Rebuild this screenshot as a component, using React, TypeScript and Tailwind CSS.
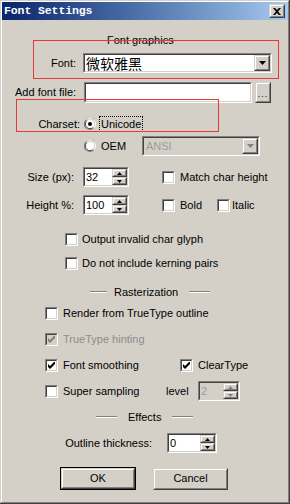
import type { ReactNode } from 'react';

const face = 'bg-[#d4d0c8]';

function Sunken({ className = '', bg = 'bg-white', children }: { className?: string; bg?: string; children?: ReactNode }) {
  return (
    <div className={`border border-t-[#808080] border-l-[#808080] border-b-white border-r-white ${className}`}>
      <div className={`h-full w-full border border-t-[#404040] border-l-[#404040] border-b-[#d4d0c8] border-r-[#d4d0c8] ${bg} flex items-center overflow-hidden`}>
        {children}
      </div>
    </div>
  );
}

function Raised({ className = '', children }: { className?: string; children?: ReactNode }) {
  return (
    <div className={`border border-t-[#d4d0c8] border-l-[#d4d0c8] border-b-[#404040] border-r-[#404040] ${face} ${className}`}>
      <div className="h-full w-full border border-t-white border-l-white border-b-[#808080] border-r-[#808080] flex items-center justify-center">
        {children}
      </div>
    </div>
  );
}

function Arrow({ up = false, gray = false, w = 7 }: { up?: boolean; gray?: boolean; w?: number }) {
  const h = Math.ceil(w / 2);
  return (
    <svg width={w} height={h} viewBox={`0 0 ${w} ${h}`} className="block">
      <path d={up ? `M0 ${h} L${w / 2} 0 L${w} ${h} Z` : `M0 0 L${w} 0 L${w / 2} ${h} Z`} fill={gray ? '#808080' : '#000'} />
    </svg>
  );
}

function Combo({ className = '', disabled = false, children }: { className?: string; disabled?: boolean; children?: ReactNode }) {
  return (
    <Sunken className={className} bg={disabled ? face : 'bg-white'}>
      <div className="flex-1 flex items-center pl-[1px] h-full">{children}</div>
      <Raised className="w-[16px] h-full">
        <Arrow gray={disabled} />
      </Raised>
    </Sunken>
  );
}

function Spinner({ value, className = '', disabled = false }: { value: string; className?: string; disabled?: boolean }) {
  return (
    <Sunken className={className} bg={disabled ? face : 'bg-white'}>
      <span className={`flex-1 pl-[1px] text-[11px] ${disabled ? 'text-[#9a9a9a]' : 'text-black'}`}>{value}</span>
      <div className="flex flex-col h-full w-[15px]">
        <Raised className="flex-1 w-full">
          <Arrow up w={5} gray={disabled} />
        </Raised>
        <Raised className="flex-1 w-full">
          <Arrow w={5} gray={disabled} />
        </Raised>
      </div>
    </Sunken>
  );
}

function Check({ checked = false, disabled = false, className = '' }: { checked?: boolean; disabled?: boolean; className?: string }) {
  return (
    <Sunken className={`w-[13px] h-[13px] shrink-0 ${className}`} bg={disabled ? face : 'bg-white'}>
      {checked && (
        <svg width="7" height="7" viewBox="0 0 7 7" className="ml-[1px]">
          <path d="M0 2 L2 4 L7 -1 V2 L2 7 L0 5 Z" fill={disabled ? '#808080' : '#000'} />
        </svg>
      )}
    </Sunken>
  );
}

function Radio({ checked = false }: { checked?: boolean }) {
  return (
    <svg width="12" height="12" viewBox="0 0 12 12" className="shrink-0">
      <path d="M10.24 1.76 A6 6 0 0 0 1.76 10.24" stroke="#808080" strokeWidth="1" fill="none" transform="translate(0 0)" />
      <circle cx="6" cy="6" r="5.5" fill="none" stroke="#808080" strokeDasharray="17.3 17.3" strokeDashoffset="-4.3" />
      <circle cx="6" cy="6" r="5.5" fill="none" stroke="#ffffff" strokeDasharray="17.3 17.3" strokeDashoffset="-21.6" />
      <circle cx="6" cy="6" r="4.5" fill="none" stroke="#404040" strokeDasharray="14.1 14.1" strokeDashoffset="-3.5" />
      <circle cx="6" cy="6" r="4.5" fill="none" stroke="#d4d0c8" strokeDasharray="14.1 14.1" strokeDashoffset="-17.6" />
      <circle cx="6" cy="6" r="4" fill="#fff" />
      {checked && <circle cx="6" cy="6" r="2" fill="#000" />}
    </svg>
  );
}

function Divider({ label, left, l1, gap1, gap2, l2 }: { label: string; left: number; l1: number; gap1: number; gap2: number; l2: number }) {
  return (
    <div className="flex items-center" style={{ paddingLeft: left }}>
      <div className="border-t border-t-[#808080] border-b border-b-white" style={{ width: l1 }} />
      <span style={{ marginLeft: gap1, marginRight: gap2 }}>{label}</span>
      <div className="border-t border-t-[#808080] border-b border-b-white" style={{ width: l2 }} />
    </div>
  );
}

export default function App() {
  return (
    <div className={`relative w-[290px] h-[504px] ${face} overflow-hidden font-['Liberation_Sans',Arial,sans-serif] text-[11px] text-black leading-none shadow-[inset_-1px_-1px_#404040,inset_1px_1px_#d4d0c8,inset_-2px_-2px_#808080,inset_2px_2px_#ffffff]`}>
      {/* title bar */}
      <div className="mx-[2px] mt-[2px] h-[18px] flex items-center bg-gradient-to-r from-[#0a246a] to-[#a6caf0]">
        <span className="ml-[2px] font-['Liberation_Mono',monospace] font-bold text-[11.5px] text-white tracking-[-0.1px]">Font Settings</span>
        <Raised className="ml-auto mr-[3px] w-[16px] h-[14px]">
          <svg width="8" height="7" viewBox="0 0 8 7">
            <path d="M0 0 H2 L4 2 L6 0 H8 L5 3.5 L8 7 H6 L4 5 L2 7 H0 L3 3.5 Z" fill="#000" />
          </svg>
        </Raised>
      </div>

      <div className="flex flex-col">
        <div className="mt-[13px] h-[14px] flex items-center pl-[107px]">Font graphics</div>

        <div className="mt-[6px] h-[20px] flex items-center">
          <span className="w-[76px] text-right">Font:</span>
          <Combo className="ml-[7px] w-[189px] h-[20px]">
            <span className="font-['Noto_Sans_CJK_SC',sans-serif] text-[14px] leading-none">微软雅黑</span>
          </Combo>
        </div>

        <div className="mt-[9px] h-[21px] flex items-center pl-[15px]">
          <span className="w-[69px]">Add font file:</span>
          <Sunken className="w-[168px] h-[21px]" />
          <Raised className="ml-[3px] w-[16px] h-[21px]">
            <span className="text-[9px] tracking-[1px] pt-[3px]">...</span>
          </Raised>
        </div>

        <div className="mt-[13px] h-[16px] flex items-center">
          <span className="w-[80px] text-right">Charset:</span>
          <span className="ml-[4px]"><Radio checked /></span>
          <span className="ml-[3px] h-[16px] px-[1px] flex items-center border border-dotted border-black">Unicode</span>
        </div>

        <div className="mt-[4px] h-[20px] flex items-center">
          <span className="ml-[84px]"><Radio /></span>
          <span className="ml-[5px] w-[41px]">OEM</span>
          <Combo disabled className="w-[118px] h-[20px]">
            <span className="text-[#9a9a9a] pl-[1px]">ANSI</span>
          </Combo>
        </div>

        <div className="mt-[11px] h-[20px] flex items-center">
          <span className="w-[74px] text-right">Size (px):</span>
          <Spinner value="32" className="ml-[9px] w-[46px] h-[20px]" />
          <Check className="ml-[33px]" />
          <span className="ml-[5px]">Match char height</span>
        </div>

        <div className="mt-[8px] h-[20px] flex items-center">
          <span className="w-[74px] text-right">Height %:</span>
          <Spinner value="100" className="ml-[9px] w-[46px] h-[20px]" />
          <Check className="ml-[33px]" />
          <span className="ml-[5px] w-[37px]">Bold</span>
          <Check />
          <span className="ml-[2px]">Italic</span>
        </div>

        <div className="mt-[16px] h-[16px] flex items-center pl-[65px]">
          <Check />
          <span className="ml-[4px]">Output invalid char glyph</span>
        </div>

        <div className="mt-[8px] h-[16px] flex items-center pl-[65px]">
          <Check />
          <span className="ml-[4px]">Do not include kerning pairs</span>
        </div>

        <div className="mt-[14px] h-[14px] flex items-center">
          <Divider label="Rasterization" left={90} l1={17} gap1={7} gap2={11} l2={21} />
        </div>

        <div className="mt-[6px] h-[16px] flex items-center pl-[45px]">
          <Check />
          <span className="ml-[5px]">Render from TrueType outline</span>
        </div>

        <div className="mt-[10px] h-[16px] flex items-center pl-[45px]">
          <Check checked disabled />
          <span className="ml-[5px] text-[#8c8c8c]">TrueType hinting</span>
        </div>

        <div className="mt-[10px] h-[16px] flex items-center pl-[45px]">
          <Check checked />
          <span className="ml-[5px] w-[117px]">Font smoothing</span>
          <Check checked />
          <span className="ml-[5px]">ClearType</span>
        </div>

        <div className="mt-[8px] h-[20px] flex items-center pl-[45px]">
          <Check />
          <span className="ml-[5px] w-[103px]">Super sampling</span>
          <span className="w-[32px]">level</span>
          <Spinner disabled value="2" className="w-[42px] h-[20px]" />
        </div>

        <div className="mt-[9px] h-[14px] flex items-center">
          <Divider label="Effects" left={96} l1={21} gap1={11} gap2={11} l2={21} />
        </div>

        <div className="mt-[9px] h-[20px] flex items-center">
          <span className="w-[152px] text-right">Outline thickness:</span>
          <Spinner value="0" className="ml-[15px] w-[50px] h-[20px]" />
        </div>

        <div className="mt-[14px] h-[23px] flex items-center pl-[60px]">
          <div className="w-[76px] h-[23px] border border-black">
            <Raised className="w-full h-full">OK</Raised>
          </div>
          <Raised className="ml-[17px] w-[75px] h-[22px]">Cancel</Raised>
        </div>
      </div>

      {/* annotation overlays */}
      <div className="absolute left-[33px] top-[40px] w-[246px] h-[39px] border border-[#e53935]" />
      <div className="absolute left-[16px] top-[99px] w-[203px] h-[33px] border border-[#e53935]" />
    </div>
  );
}
